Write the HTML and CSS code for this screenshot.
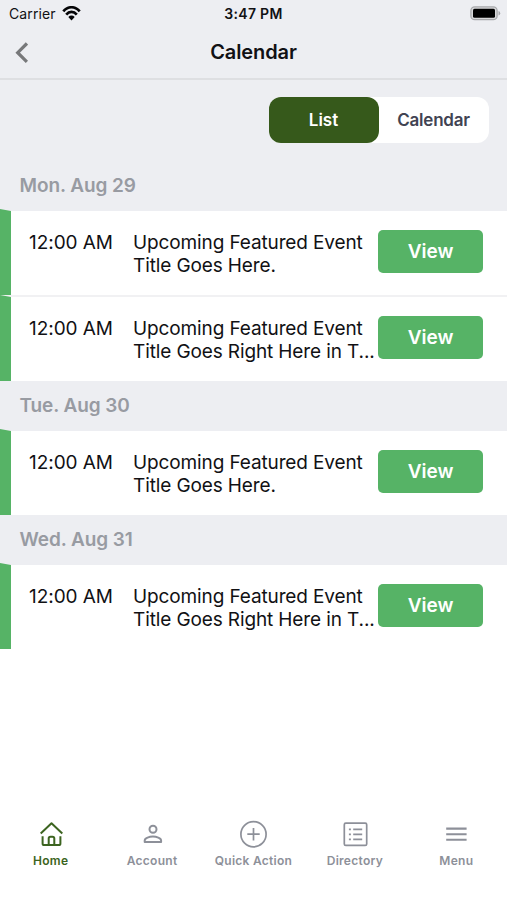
FILE: index.html
```html
<!DOCTYPE html>
<html lang="en">
<head>
<meta charset="utf-8">
<title>Calendar</title>
<link rel="stylesheet" href="styles.css">
</head>
<body>
<div class="app">
  <header class="header">
    <div class="status">
      <div class="carrier"><span>Carrier</span>
        <svg class="wifi" width="19" height="15" viewBox="0 0 19 15"><path d="M1.300 5.300C6-.1 13-.1 17.700 5.300M4.200 8.600c3.100-3.600 7.500-3.600 10.600 0" fill="none" stroke="#050507" stroke-width="2.700"/><path d="M6.300 10.900c1.900-1.900 4.500-1.900 6.400 0L9.500 14.400z" fill="#050507"/></svg>
      </div>
      <div class="clock">3:47 PM</div>
      <div class="power">
        <svg width="31" height="15" viewBox="0 0 31 15"><rect x=".9" y=".9" width="26.200" height="12.800" rx="3.800" fill="#d8d8da" stroke="#a7a8ab" stroke-width="1.300"/><rect x="3" y="2.800" width="22" height="9" rx="1.500" fill="#000"/><path d="M28.500 5v4.600q1.700-.6 1.700-2.300T28.500 5z" fill="#a7a8ab"/></svg>
      </div>
    </div>
    <div class="titlebar">
      <svg class="back" width="14" height="22" viewBox="0 0 14 22"><path d="M12.900 1.500 3.700 10.700l9.200 9.200" fill="none" stroke="#77787a" stroke-width="3.200"/></svg>
      <h1>Calendar</h1>
    </div>
  </header>
  <main>
    <div class="switcher"><div class="toggle"><span class="option selected">List</span><span class="option">Calendar</span></div></div>
    <section>
      <h2 class="first">Mon. Aug 29</h2>
      <article class="event divided"><i class="mark"></i><time>12:00 AM</time><p>Upcoming Featured Event<br>Title Goes Here.</p><button>View</button></article>
      <article class="event"><i class="mark"></i><time>12:00 AM</time><p>Upcoming Featured Event<br>Title Goes Right Here in T...</p><button>View</button></article>
    </section>
    <section>
      <h2>Tue. Aug 30</h2>
      <article class="event"><i class="mark"></i><time>12:00 AM</time><p>Upcoming Featured Event<br>Title Goes Here.</p><button>View</button></article>
    </section>
    <section>
      <h2>Wed. Aug 31</h2>
      <article class="event"><i class="mark"></i><time>12:00 AM</time><p>Upcoming Featured Event<br>Title Goes Right Here in T...</p><button>View</button></article>
    </section>
  </main>
  <nav class="tabs">
    <a class="tab active"><svg width="28" height="28" viewBox="0 0 28 28"><path d="M3.700 13.400 14.500 3.200l10.800 10.200M5.600 16.200v7.300q0 1.600 1.600 1.600h14.600q1.600 0 1.600-1.600v-7.300M11.700 25v-6.400q0-1.800 1.800-1.800h2q1.800 0 1.800 1.800V25"/></svg><span>Home</span></a>
    <a class="tab"><svg width="28" height="28" viewBox="0 0 28 28"><g stroke-width="2"><circle cx="15" cy="9.300" r="3.500"/><path d="M6.700 22v-1.600c0-2.500 4.800-3.800 8.200-3.800s8.200 1.300 8.200 3.800V22z"/></g></svg><span>Account</span></a>
    <a class="tab"><svg width="28" height="28" viewBox="0 0 28 28"><path d="M14.500 8v12.400M8.300 14.200h12.400"/><circle cx="14.500" cy="14.200" r="12.600"/></svg><span>Quick Action</span></a>
    <a class="tab"><svg width="28" height="28" viewBox="0 0 28 28"><rect x="3.300" y="3.200" width="22.400" height="22.200" rx="1.500"/><path d="M7.900 9.300h2M12.200 9.300h9M7.900 14.300h2M12.200 14.300h9M7.900 19.300h2M12.200 19.300h9"/></svg><span>Directory</span></a>
    <a class="tab"><svg width="28" height="28" viewBox="0 0 28 28"><path stroke-width="2.100" d="M4.200 8.600h20.400M4.200 14.200h20.400M4.200 19.800h20.400"/></svg><span>Menu</span></a>
  </nav>
</div>
</body>
</html>
```
FILE: styles.css
```css
* { box-sizing: border-box; }
body { margin: 0; background: #fff; color: #111114; font-family: Inter, "Liberation Sans", sans-serif; }
h1, h2, p { margin: 0; }
.app { width: 507px; height: 900px; display: flex; flex-direction: column; overflow: hidden; }
.header { height: 80px; background: #edeef2; border-bottom: 2px solid #dedfe2; }
.status { height: 28px; display: grid; grid-template-columns: 1fr auto 1fr; align-items: center; font-size: 14px; line-height: 28px; }
.carrier { display: flex; align-items: center; gap: 6px; padding-left: 9px; }
.carrier span { letter-spacing: 0.1px; }
.wifi { margin-top: -2px; }
.clock { font-weight: 600; letter-spacing: 0.3px; }
.power { display: flex; justify-content: flex-end; padding-right: 6px; margin-top: -2px; }
.titlebar { height: 50px; display: grid; grid-template-columns: 40px 1fr 40px; align-items: center; }
.back { margin-left: 14px; margin-top: -1px; }
h1 { text-align: center; font-size: 20px; font-weight: 600; letter-spacing: -0.1px; line-height: 48px; margin-top: -2px; }
.switcher { background: #edeef2; height: 80px; padding: 17px 18.5px 0; display: flex; justify-content: flex-end; align-items: flex-start; }
.toggle { width: 220px; height: 46px; display: grid; grid-template-columns: 1fr 1fr; border-radius: 12px; background: #fff; }
.option { display: flex; align-items: center; justify-content: center; border-radius: 12px; font-size: 17px; font-weight: 600; letter-spacing: -0.2px; color: #414352; }
.selected { background: #36591b; color: #fff; letter-spacing: 0; }
h2 { height: 50px; padding-left: 19.5px; line-height: 49px; background: #edeef2; color: #989ba2; font-size: 19px; font-weight: 600; letter-spacing: -0.1px; }
h2.first { height: 51px; line-height: 51px; }
.event { height: 84px; display: grid; grid-template-columns: 11px 18px 104px 245.4px 104.4px; align-items: start; font-size: 19px; line-height: 23px; }
.event.divided { height: 86px; border-bottom: 2px solid #f1f1f3; }
.mark { height: 86px; margin-top: -2px; background: #56b366; clip-path: polygon(0 0, 100% 2px, 100% 100%, 0 100%); }
time { grid-column: 3; padding-top: 20px; letter-spacing: -0.05px; }
.event p { padding-top: 20px; white-space: nowrap; letter-spacing: -0.12px; }
button { width: 104.4px; height: 43px; margin: 19px 0 0; padding: 0; border: 0; border-radius: 5px; background: #56b366; color: #fff; font: 600 19px/43px Inter, sans-serif; }
.tabs { margin-top: auto; height: 81px; display: grid; grid-template-columns: repeat(5, 1fr); }
.tab { display: flex; flex-direction: column; align-items: center; color: #8d9099; font-size: 12px; font-weight: 600; line-height: 16px; letter-spacing: 0.27px; white-space: nowrap; }
.tab svg { fill: none; stroke: currentColor; stroke-width: 1.7; margin-top: 1px; margin-bottom: 5px; stroke-linejoin: round; }
.tab.active { color: #3c6420; }
.active svg { stroke-width: 2; }
```
